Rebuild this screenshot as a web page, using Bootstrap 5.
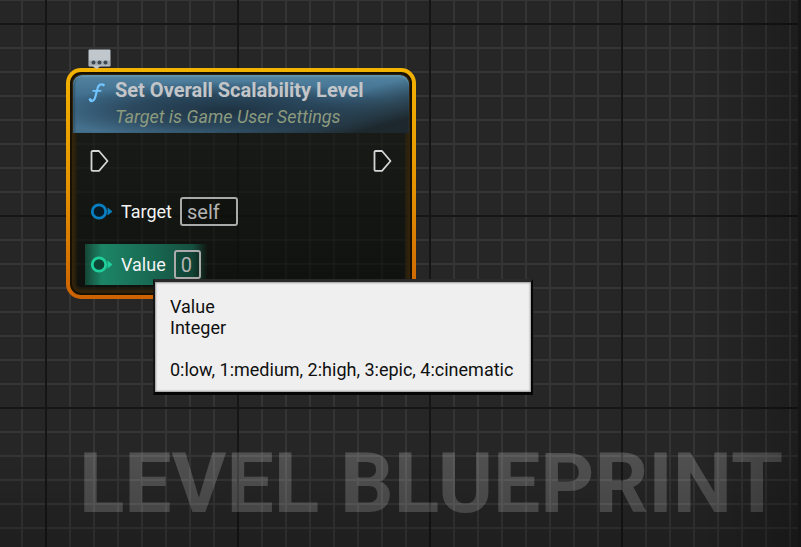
<!DOCTYPE html>
<html lang="en">
<head>
<meta charset="utf-8">
<meta name="viewport" content="width=device-width, initial-scale=1">
<title>Level Blueprint</title>
<link href="https://cdn.jsdelivr.net/npm/bootstrap@5.3.0/dist/css/bootstrap.min.css" rel="stylesheet">
<style>
body { font-family: Roboto, "Liberation Sans", sans-serif; font-size: 18px; line-height: 21px; background: #262626; }
.graph {
  --minor: #353535; --major: #151515;
  background-color: #262626;
  background-image:
    linear-gradient(to right, var(--major) 2px, transparent 2px),
    linear-gradient(to bottom, var(--major) 2px, transparent 2px),
    linear-gradient(to right, var(--minor) 2px, transparent 2px),
    linear-gradient(to bottom, var(--minor) 2px, transparent 2px);
  background-size: 192px 192px, 192px 192px, 24px 24px, 24px 24px;
  background-position: 45px 0, 0 23px, 21px 0, 0 23px;
}
/* darkened edges of the graph panel */
.graph::after {
  content: ""; position: absolute; inset: 0; pointer-events: none;
  background:
    linear-gradient(to left, #151515 3px, transparent 3px),
    linear-gradient(to left, rgba(0,0,0,.25), transparent 100px),
    linear-gradient(to top, rgba(0,0,0,.2), transparent 100px);
}
.watermark { font-size: 84px; line-height: 104px; font-weight: 700; color: rgba(255,255,255,.2); padding: 0 18px 11px; }
.node { left: 66px; top: 68px; width: 350px; padding: 4px; border-radius: 15px; background: linear-gradient(#f3b300, #e59400 50%, #cc6200); z-index: 1; }
.node-inner {
  --minor: rgba(255,255,255,.025); --major: rgba(0,0,0,.35);
  border-radius: 11px; padding: 3px 3px 10px; background-color: #0d100d;
  background-image:
    linear-gradient(to right, var(--major) 2px, transparent 2px),
    linear-gradient(to bottom, var(--major) 2px, transparent 2px),
    linear-gradient(to right, var(--minor) 2px, transparent 2px),
    linear-gradient(to bottom, var(--minor) 2px, transparent 2px),
    linear-gradient(#1b1e19, #0e110d);
  background-size: 192px 192px, 192px 192px, 24px 24px, 24px 24px, 100% 100%;
  background-position: -25px 0, 0 -49px, 23px 0, 0 23px, 0 0;
  box-shadow: inset 0 0 0 2px #171003, inset 0 0 3px 6px #32240c;
}
.node-head {
  border-radius: 9px 9px 0 0; padding: 3px 14px 2px 15px; gap: 8px;
  background:
    radial-gradient(ellipse 175px 30px at 46% 62%, rgba(28,47,62,.95), rgba(28,47,62,.6) 55%, transparent),
    linear-gradient(165deg, transparent 62%, rgba(25,32,35,.9) 90%),
    linear-gradient(#5283a1, #3f6d8c 40%, #46718e);
  box-shadow: inset 0 2px 1px rgba(120,175,200,.45), inset 2px 0 2px rgba(30,50,60,.4);
}
.node-title { font-size: 20px; line-height: 24px; font-weight: 700; color: #c3c5c8; }
.node-sub { font-size: 18px; line-height: 28px; padding-top: 1px; font-style: italic; color: #8c9a7e; }
.node-body { padding: 17px 16px 0 12px; }
.exec-row { padding: 0 1px 0 5px; height: 22px; }
.pin-row { height: 41px; padding-left: 5px; gap: 9px; width: 154px; color: #f4f4f4; }
.pin-row.target { margin-top: 19px; }
.pin-row label { margin-right: -1px; }
.pin-row.value {
  margin-top: 12px; width: 122px;
  background: linear-gradient(to right, rgba(27,130,100,.45), #1c8565 14%, #196c54 50%, #15503f 88%, rgba(18,60,48,.1));
}
.pin-input {
  height: 29px; padding: 0 5px; border: 2px solid #a9aaa9; border-radius: 3px;
  background: rgba(0,0,0,.15); color: #b3b3b3; font: 20px/24px Roboto, sans-serif; outline: 0;
}
.pin-input.wide { width: 58px; }
.pin-input.digit { width: 27px; }
.comment { left: 22px; top: -20px; width: 24px; height: 22px; }
.tip { left: 153px; top: 279px; padding: 14px 18px 12px 15px; background: #efefef; border: 2px solid #050505; border-top: 3px solid #292929; border-bottom-width: 3px; border-left-color: #151515; box-shadow: inset 0 0 2px 1px #999; color: #101010; z-index: 2; }
</style>
</head>
<body>
<main class="graph position-relative min-vh-100 overflow-hidden d-flex align-items-end justify-content-end">
  <div class="watermark text-nowrap">LEVEL BLUEPRINT</div>

  <section class="node position-absolute" aria-label="Set Overall Scalability Level">
    <button type="button" class="comment btn p-0 border-0 position-absolute d-block" aria-label="Comment">
      <svg class="d-block" width="24" height="22" viewBox="0 0 24 22"><path d="M1.500 1.500h20a1 1 0 0 1 1 1v15a1 1 0 0 1-1 1H12l-3.500 2.500-3.500-2.500H1.500a1 1 0 0 1-1-1v-15a1 1 0 0 1 1-1z" fill="#c1c8cd"/><path d="M1 12.500h21v5H1z" fill="#a5adb3"/><g fill="#3d4851"><circle cx="5.500" cy="14.500" r="2"/><circle cx="11.500" cy="14.500" r="2"/><circle cx="17.500" cy="14.500" r="2"/></g></svg>
    </button>
    <div class="node-inner">
      <header class="node-head d-flex align-items-start">
        <svg class="flex-shrink-0 mt-1" width="19" height="22" viewBox="0 0 19 22" fill="none" stroke="#70c5ff" stroke-linecap="round"><path d="M2 18C3.500 20 6.300 19 7.300 15L9.500 6.500C10.300 3 13 1.300 15.500 3" stroke-width="2.200"/><path d="M5.200 8.800h7.500" stroke-width="1.700"/><circle cx="2.200" cy="17.600" r="1" fill="#70c5ff"/><circle cx="15.300" cy="3" r=".8" fill="#70c5ff"/></svg>
        <div>
          <div class="node-title text-nowrap">Set Overall Scalability Level</div>
          <div class="node-sub text-nowrap">Target is Game User Settings</div>
        </div>
      </header>
      <div class="node-body">
        <div class="exec-row d-flex justify-content-between">
          <svg width="19" height="22" viewBox="0 0 19 22" fill="#101310" stroke="#d4d4d4" stroke-width="1.800" stroke-linejoin="round"><path d="M2.500 1h6.500l8.500 10-8.500 9.800H2.500a1 1 0 0 1-1-1V2a1 1 0 0 1 1-1z"/></svg>
          <svg width="19" height="22" viewBox="0 0 19 22" fill="#101310" stroke="#d4d4d4" stroke-width="1.800" stroke-linejoin="round"><path d="M2.500 1h6.500l8.500 10-8.500 9.800H2.500a1 1 0 0 1-1-1V2a1 1 0 0 1 1-1z"/></svg>
        </div>
        <div class="pin-row target d-flex align-items-center">
          <svg class="flex-shrink-0" width="22" height="18" viewBox="0 0 22 18"><circle cx="9" cy="8.500" r="6.700" fill="#071a26" stroke="#087fc0" stroke-width="2.800"/><path d="M17.500 4.500L22.500 8.500l-5 4z" fill="#087fc0"/></svg>
          <label for="pin-target">Target</label>
          <input id="pin-target" class="pin-input wide" type="text" value="self">
        </div>
        <div class="pin-row value d-flex align-items-center">
          <svg class="flex-shrink-0" width="22" height="18" viewBox="0 0 22 18"><circle cx="9" cy="8.500" r="6.700" fill="#0d4534" stroke="#1fcf9c" stroke-width="2.800"/><path d="M17.500 4.500L22.500 8.500l-5 4z" fill="#1fcf9c"/></svg>
          <label for="pin-value">Value</label>
          <input id="pin-value" class="pin-input digit" type="text" value="0" aria-describedby="value-tip">
        </div>
      </div>
    </div>
  </section>

  <div id="value-tip" class="tip position-absolute text-nowrap" role="tooltip">
    <div>Value</div>
    <div>Integer</div>
    <br>
    <div>0:low, 1:medium, 2:high, 3:epic, 4:cinematic</div>
  </div>
</main>
<script src="https://cdn.jsdelivr.net/npm/bootstrap@5.3.0/dist/js/bootstrap.bundle.min.js"></script>
</body>
</html>
